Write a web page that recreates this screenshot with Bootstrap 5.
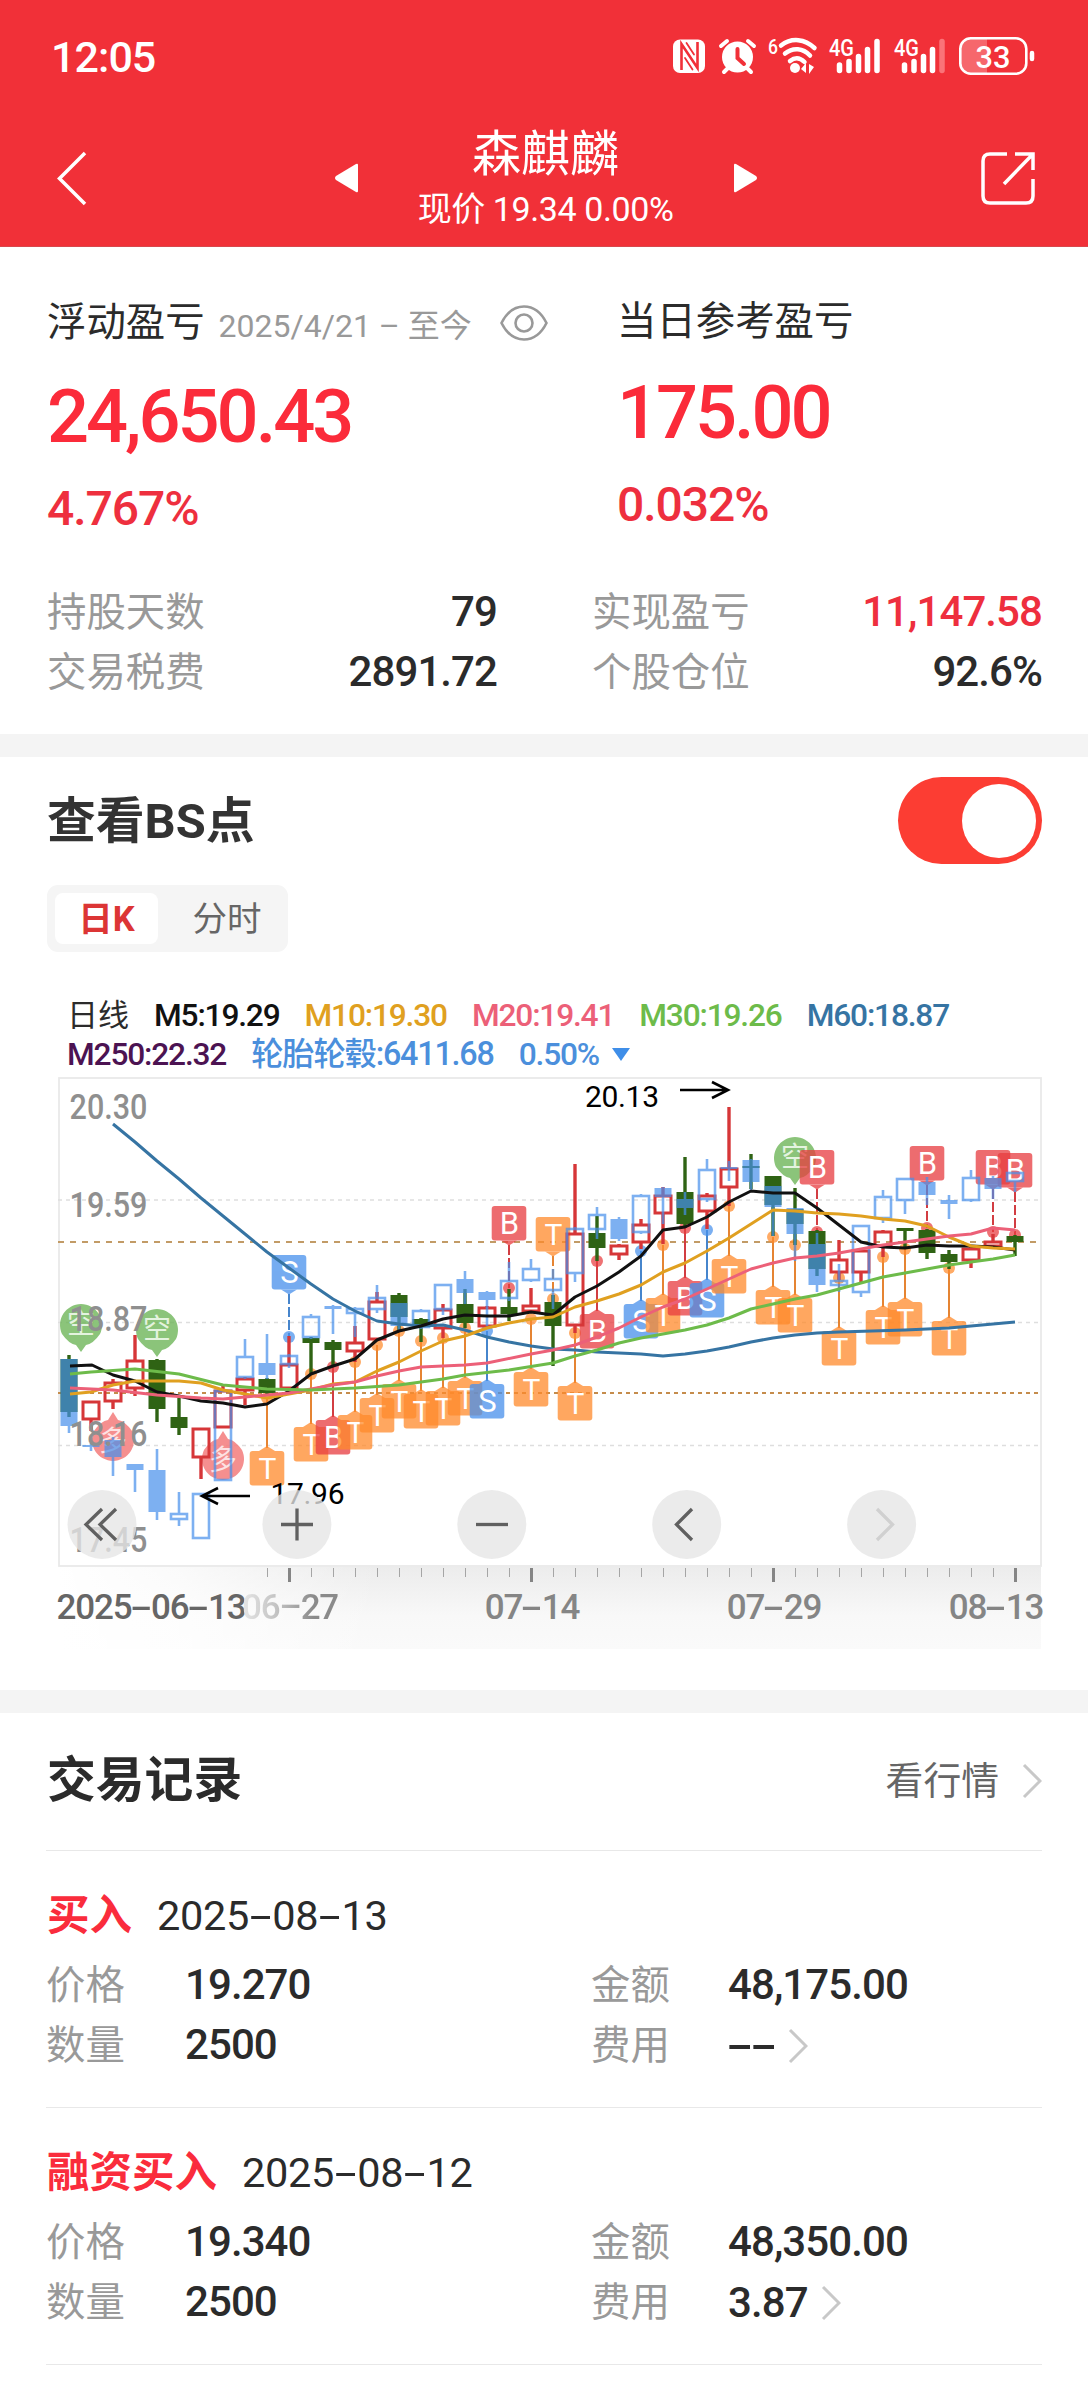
<!DOCTYPE html>
<html lang="zh-CN">
<head>
<meta charset="utf-8">
<meta name="viewport" content="width=device-width, initial-scale=1">
<title>森麒麟</title>
<link href="https://cdn.jsdelivr.net/npm/bootstrap@5.3.0/dist/css/bootstrap.min.css" rel="stylesheet">
<style>
  body { font-family: Roboto, "Noto Sans CJK SC", sans-serif; color: #2b2b2b; background: #fff; width: 1088px; overflow-x: hidden; }
  .num { letter-spacing: -.022em; font-weight: 500; white-space: nowrap; }
  .hy { display: inline-block; width: .56em; text-align: center; transform: scaleX(1.9); letter-spacing: 0; }
  .topbar { background: #f13038; height: 247px; color: #fff; border-bottom: 1px solid #d8474c; }
  .statusline { height: 114px; padding: 0 52px 0 51px; }
  .clock { font-size: 43px; }
  .navline { height: 132px; padding: 4px 53px 0 56px; }
  .navline svg { margin-bottom: 9px; }
  .navtitle { font-size: 49px; line-height: 54px; }
  .navsub { font-size: 34px; line-height: 54px; font-weight: 400; letter-spacing: -.012em; }
  .navmid { width: 424px; }
  .gut { padding-left: 47px; padding-right: 46px; }
  .lab { font-size: 39.4px; line-height: 60px; white-space: nowrap; }
  .dim { color: #999; }
  .range { font-size: 32px; color: #999; line-height: 54px; padding-top: 6px; margin: 0 28px 0 14px; white-space: nowrap; }
  .big { font-size: 74px; line-height: 90px; margin-top: 19px; color: #fb2b3a; letter-spacing: -.041em; }
  .pct { font-size: 48px; line-height: 60px; margin-top: 17px; color: #ee2f3e; }
  .val { font-size: 42px; line-height: 57px; }
  .up { color: #ee2f3e; }
  .band { height: 23px; background: #f4f4f4; }
  .head { font-size: 48.8px; font-weight: 700; line-height: 60px; color: #2b2b2b; }
  .switch { width: 144px; height: 87px; border-radius: 44px; background: #fc3d33; padding: 6.5px; }
  .knob { width: 74px; height: 74px; border-radius: 50%; background: #fff; }
  .segs { width: 241px; height: 67px; margin-top: 21px; padding: 8px; border-radius: 11px; background: #f5f5f5; font-size: 34.5px; line-height: 52px; }
  .seg-on { width: 103px; background: #fff; border-radius: 8px; color: #dc3535; font-weight: 700; flex-shrink: 0; }
  .seg-off { color: #666; width: 138px; flex-shrink: 0; }
  .legend-box { margin: 44px 0 0 20px; font-size: 31.7px; line-height: 39px; }
  .legend-box .num { letter-spacing: -.037em; }
  .chart-area { margin: 0 -46px 0 -47px; }
  .axis { height: 82px; margin: 0 0 41px 12px; font-size: 35px; line-height: 40px; color: #858585; width: 982px;
    background: linear-gradient(90deg, #fff 0, rgba(255,255,255,.75) 120px, rgba(255,255,255,0) 320px), linear-gradient(#ececec, #f8f8f8 60%, #fafafa); }
  .axis .tick-label { position: absolute; top: 21px; transform: translateX(-50%); letter-spacing: -.034em; }
  .rec { height: 257.2px; padding: 35px 0 0; border-bottom: 1px solid #e8e8e8; margin: 0 46px; }
  .rec-title { font-size: 41.5px; line-height: 60px; }
  .rec-type { font-size: 42.5px; color: #fa2c3c; margin: 0 25px 0 1px; }
  .rec-date { font-weight: 400; letter-spacing: -.008em; }
  .k { width: 139px; }
  .half { width: 545px; }
</style>
</head>
<body>
<header class="topbar">
  <div class="statusline d-flex align-items-center justify-content-between">
    <div class="clock num">12:05</div>
    <svg width="366" height="50" viewBox="670 32 366 50" fill="none" stroke="#fff" stroke-linecap="round">
      <rect x="673" y="39.500" width="32" height="33.500" rx="7" fill="#fff" stroke="none"/>
      <path d="M681.500 70V44L697.500 68V42" stroke="#f13038" stroke-width="2.600" stroke-linecap="butt"/>
      <path d="M686.500 43L694 54.500M685 58L692.500 69.500" stroke="#f13038" stroke-width="1.800"/>
      <circle cx="737.500" cy="57" r="15.500" fill="#fff" stroke="none"/>
      <path d="M721 46l6-5M754 46l-6-5M728 68l-4 4M747 68l4 4" stroke-width="4"/>
      <path d="M737.500 49v9l6.500 6" stroke="#f13038" stroke-width="4"/>
      <text x="768" y="54" font-size="20" font-weight="500" fill="#fff" stroke="none" textLength="10" lengthAdjust="spacingAndGlyphs">6</text>
      <path d="M781 45.500C792 37 805 39 814.500 48M785 53.500C793 47 803 48 810 55.500M790 61C795 57 800 57.500 804.500 62" stroke-width="4.500"/>
      <circle cx="795" cy="68" r="5" fill="#fff" stroke="none"/>
      <path d="M806 63v10l-5-4zM809 64v10l5-7z" fill="#fff" stroke="none"/>
      <text x="829" y="56" font-size="23.500" font-weight="500" fill="#fff" stroke="none" textLength="25" lengthAdjust="spacingAndGlyphs">4G</text>
      <path d="M839.500 65v5.500M849 61.500v9M858.500 56.500v14M867.500 49.500v21M877 41.500v29" stroke-width="5.500"/>
      <text x="894" y="56" font-size="23.500" font-weight="500" fill="#fff" stroke="none" textLength="25" lengthAdjust="spacingAndGlyphs">4G</text>
      <path d="M904.500 65v5.500M914 61.500v9M923.500 56.500v14M932.500 49.500v21" stroke-width="5.500"/>
      <path d="M942 41.500v29" stroke-width="5.500" stroke="#fa7378"/>
      <path d="M971 38.500h16v35h-16q-10-1-10-11v-13q0-10 10-11z" fill="#f6676c" stroke="none"/>
      <rect x="960.300" y="38.300" width="66" height="35.400" rx="10.500" stroke-width="2.600"/>
      <path d="M1032 53v6" stroke-width="4.500"/>
      <text x="975.500" y="68" font-size="32" font-weight="500" fill="#fff" stroke="none" textLength="35" lengthAdjust="spacingAndGlyphs">33</text>
    </svg>
  </div>
  <div class="navline d-flex justify-content-between align-items-center">
    <div style="width:54px"><svg width="32" height="56" viewBox="0 0 32 56" fill="none" stroke="#fff" stroke-width="3.500"><path d="M29 3L3.500 28.500L29 54"/></svg></div>
    <div class="navmid d-flex justify-content-between align-items-center">
      <svg width="24" height="32" viewBox="0 0 24 32" fill="#fff"><path d="M24 3v26q0 2-2 1L2 18q-2-2 0-4L22 2q2-1 2 1z"/></svg>
      <div class="text-center">
        <div class="navtitle">森麒麟</div>
        <div class="navsub num">现价 19.34 0.00%</div>
      </div>
      <svg width="24" height="32" viewBox="0 0 24 32" fill="#fff"><path d="M0 3v26q0 2 2 1L22 18q2-2 0-4L2 2Q0 1 0 3z"/></svg>
    </div>
    <svg width="54" height="54" viewBox="0 0 54 54" fill="none" stroke="#fff" stroke-width="3.500"><path d="M26 3H9Q2 3 2 10v35q0 7 7 7h36q7 0 7-7V28M34 3h18v16M52 3L23 33"/></svg>
  </div>
</header>

<section class="gut" style="height:487px;padding-top:46px">
  <div class="d-flex">
    <div style="width:570px">
      <div class="d-flex align-items-center">
        <span class="lab">浮动盈亏</span>
        <span class="range">2025/4/21 – 至今</span>
        <svg width="48" height="36" viewBox="0 0 48 36" fill="none" stroke="#999" stroke-width="2.600"><path d="M1.500 18C7 7 15 1.500 24 1.500S41 7 46.500 18C41 29 33 34.500 24 34.500S7 29 1.500 18z"/><circle cx="24" cy="18" r="8.500"/></svg>
      </div>
      <div class="num big">24,650.43</div>
      <div class="num pct">4.767%</div>
    </div>
    <div>
      <div class="lab" style="line-height:57px">当日参考盈亏</div>
      <div class="num big" style="margin-top:18px">175.00</div>
      <div class="num pct">0.032%</div>
    </div>
  </div>
  <div class="d-flex justify-content-between" style="margin-top:44px">
    <div style="width:450px">
      <div class="d-flex justify-content-between"><span class="lab dim">持股天数</span><span class="val num">79</span></div>
      <div class="d-flex justify-content-between"><span class="lab dim">交易税费</span><span class="val num">2891.72</span></div>
    </div>
    <div style="width:450px">
      <div class="d-flex justify-content-between"><span class="lab dim">实现盈亏</span><span class="val num up">11,147.58</span></div>
      <div class="d-flex justify-content-between"><span class="lab dim">个股仓位</span><span class="val num">92.6%</span></div>
    </div>
  </div>
</section>

<div class="band"></div>

<section class="gut" style="padding-top:20px">
  <div class="d-flex justify-content-between align-items-center" style="height:87px">
    <div class="head" style="color:#333;padding-top:2px">查看BS点</div>
    <div class="switch d-flex justify-content-end"><div class="knob"></div></div>
  </div>
  <div class="segs d-flex text-center"><div class="seg-on">日K</div><div class="seg-off">分时</div></div>
  <div class="legend-box">
    <div class="d-flex" style="gap:25px">
      <span style="font-size:31px">日线</span>
      <span class="num" style="color:#111">M5:19.29</span><span class="num" style="color:#e0a020">M10:19.30</span><span class="num" style="color:#ec6078">M20:19.41</span><span class="num" style="color:#6dbb4a">M30:19.26</span><span class="num" style="color:#3674a3">M60:18.87</span>
    </div>
    <div class="d-flex align-items-center" style="gap:25px">
      <span class="num" style="color:#4c1352">M250:22.32</span><span class="num" style="color:#4b8fdc;font-size:32.3px">轮胎轮毂:6411.68</span><span class="num" style="color:#4b8fdc">0.50%</span>
      <svg width="18" height="14" viewBox="0 0 18 14" style="margin-left:-12px"><path d="M0 0h18L9 13z" fill="#3f8ee8"/></svg>
    </div>
  </div>
  <div class="chart-area"><svg id="chart" class="d-block" width="1088" height="493" viewBox="0 1075 1088 493" font-family='Roboto, "Noto Sans CJK SC", sans-serif'></svg></div>
  <div class="axis position-relative" id="axis"></div>
</section>

<div class="band"></div>

<section>
  <div class="gut d-flex justify-content-between align-items-center" style="height:136.5px">
    <div class="head">交易记录</div>
    <div class="d-flex align-items-center" style="font-size:37.800px;color:#666">看行情<svg width="20" height="36" viewBox="0 0 20 36" fill="none" stroke="#c8c8c8" stroke-width="3" style="margin-left:23px"><path d="M2 2l16 16L2 34"/></svg></div>
  </div>
  <div style="margin:0 46px;border-top:1px solid #e8e8e8"></div>
  <div id="records"></div>
</section>

<script src="https://cdn.jsdelivr.net/npm/bootstrap@5.3.0/dist/js/bootstrap.bundle.min.js"></script>
<script>
const hy = s => s.replace(/-/g, '<span class="hy">-</span>');

/* trade records */
document.getElementById('records').innerHTML = [
  ['买入', '2025-08-13', '19.270', '48,175.00', '2500', '--'],
  ['融资买入', '2025-08-12', '19.340', '48,350.00', '2500', '3.87']
].map(([type, date, price, amount, qty, fee]) => `
  <div class="rec">
    <div class="rec-title d-flex"><b class="rec-type">${type}</b><span class="num rec-date">${hy(date)}</span></div>
    <div class="d-flex" style="margin-top:10px">
      <div class="half d-flex"><span class="lab dim k">价格</span><span class="val num">${price}</span></div>
      <div class="d-flex"><span class="lab dim" style="width:137px">金额</span><span class="val num">${amount}</span></div>
    </div>
    <div class="d-flex">
      <div class="half d-flex"><span class="lab dim k">数量</span><span class="val num">${qty}</span></div>
      <div class="d-flex align-items-center"><span class="lab dim" style="width:137px">费用</span><span class="val num">${hy(fee)}</span>
        <svg width="20" height="36" viewBox="0 0 20 36" fill="none" stroke="#c8c8c8" stroke-width="3" style="margin-left:13px"><path d="M2 2l16 16L2 34"/></svg></div>
    </div>
  </div>`).join('');

/* chart: candle i stands at X(i); rows are [colour, high, open/close top, bottom, low] */
const X = i => 69 + 22 * i;
const stock = [
 ['g',1356,1360,1413,1418],['r',1402,1403,1420,1432],['r',1380,1384,1402,1410],['r',1336,1362,1389,1397],['g',1360,1361,1410,1423],
 ['g',1399,1418,1429,1436],['r',1429,1430,1458,1480],['r',1385,1392,1428,1429],['r',1378,1380,1391,1406],['g',1379,1380,1394,1397],
 ['r',1337,1366,1389,1390],['g',1338,1339,1344,1375],['g',1341,1343,1351,1368],['r',1327,1344,1352,1363],['r',1293,1303,1340,1341],
 ['g',1294,1296,1318,1332],['g',1319,1320,1326,1343],['r',1305,1311,1329,1339],['g',1290,1305,1324,1329],['r',1307,1309,1327,1328],
 ['g',1290,1308,1315,1322],['r',1289,1307,1312,1314],['g',1296,1303,1327,1367],['r',1165,1235,1326,1334],['g',1217,1234,1249,1262],
 ['r',1245,1247,1255,1261],['r',1220,1226,1243,1250],['r',1188,1197,1214,1245],['g',1158,1193,1225,1229],['r',1194,1197,1212,1230],
 ['r',1108,1170,1188,1207],['g',1155,1167,1169,1190],['g',1177,1177,1206,1237],['g',1189,1210,1225,1246],['g',1231,1232,1270,1277],
 ['r',1241,1261,1273,1281],['r',1250,1252,1273,1284],['r',1231,1233,1247,1258],['g',1229,1229,1232,1250],['g',1230,1231,1254,1260],
 ['g',1251,1255,1263,1270],['r',1247,1250,1261,1269],['r',1235,1243,1247,1248],['g',1236,1237,1243,1257]];
/* sector index: h = hollow, s = solid */
const sector = [
 ['s',1360,1360,1427,1434],['s',1444,1446,1448,1452],['s',1438,1441,1458,1477],['s',1465,1465,1471,1493],['s',1450,1471,1513,1521],
 ['h',1493,1515,1520,1527],['h',1494,1495,1539,1540],['h',1391,1392,1481,1481],['h',1340,1358,1378,1380],['s',1335,1364,1376,1380],
 ['h',1355,1357,1365,1369],['h',1315,1318,1338,1340],['s',1306,1307,1310,1335],['h',1308,1310,1314,1338],['h',1286,1299,1310,1314],
 ['s',1304,1304,1327,1333],['h',1310,1312,1328,1330],['h',1285,1286,1310,1316],['s',1272,1280,1294,1305],['s',1292,1293,1301,1327],
 ['h',1263,1282,1299,1302],['h',1260,1270,1281,1283],['h',1270,1280,1291,1310],['h',1228,1230,1274,1283],['h',1208,1216,1230,1240],
 ['s',1218,1220,1240,1242],['h',1195,1197,1233,1235],['s',1188,1189,1198,1225],['s',1193,1200,1209,1216],['h',1160,1171,1200,1203],
 ['s',1162,1168,1170,1182],['s',1160,1161,1183,1192],['s',1187,1187,1208,1237],['s',1209,1209,1235,1262],['s',1234,1245,1286,1293],
 ['h',1265,1282,1286,1293],['h',1226,1227,1293,1298],['h',1191,1198,1219,1224],['h',1179,1180,1201,1215],['s',1178,1183,1196,1206],
 ['s',1196,1201,1205,1220],['h',1171,1179,1201,1203],['s',1177,1179,1190,1200],['h',1173,1174,1182,1193]];
/* deals: [index, letter, dot y, side] */
const deals = [[10,'S',1338,1],[20,'B',1289,1],[22,'T',1300,1],[34,'B',1233,1],[39,'B',1229,1],[42,'B',1233,1],[43,'B',1236,1],
 [9,'T',1399],[11,'T',1375],[12,'B',1368],[13,'T',1363],[14,'T',1346],[15,'T',1332],[16,'T',1342],[17,'T',1339],[18,'T',1329],[19,'S',1332],
 [21,'T',1320],[23,'T',1334],[24,'B',1262],[26,'S',1252],[27,'T',1246],[28,'B',1229],[29,'S',1231],[30,'T',1207],[32,'T',1238],[33,'T',1246],
 [35,'T',1279],[37,'T',1258],[38,'T',1250],[40,'T',1269]];
const fill = {T:'#ff8a2b', B:'#e83c3f', S:'#4790ec'}, pole = {T:'#e58432', B:'#d23d42', S:'#4685cc'};
let out = '';
const line = (x1,y1,x2,y2,c,w,extra='') => out += `<line x1="${x1}" y1="${y1}" x2="${x2}" y2="${y2}" stroke="${c}" stroke-width="${w}" ${extra}/>`;

out += '<rect x="59" y="1079" width="982" height="488" fill="none" stroke="#e9e9e9" stroke-width="1.8"/>';
[1201,1323.500,1446.500].forEach(y => line(58,y,1040,y,'#dedede',1.3,'stroke-dasharray="4 4"'));
line(58,1243,1040,1243,'#c29b66',1.8,'stroke-dasharray="6 6"');
line(58,1394,1040,1394,'#c58c4c',2,'stroke-dasharray="4 4"');

/* long / short signal balloons */
[[81,1325],[157,1330],[795,1158]].forEach(([x,y]) => out += `<g opacity=".78"><path d="M${x-19} ${y+10}A21 21 0 1 1 ${x+19} ${y+10}Q${x+12} ${y+20} ${x+5} ${y+21}L${x} ${y+28}L${x-5} ${y+21}Q${x-12} ${y+20} ${x-19} ${y+10}z" fill="#6ab355"/></g><text x="${x}" y="${y+10}" font-size="28" fill="#e4f3df" text-anchor="middle">空</text>`);
[[113,1442],[223,1461]].forEach(([x,y]) => out += `<path d="M${x-19} ${y-10}A21 21 0 1 0 ${x+19} ${y-10}Q${x+12} ${y-20} ${x+5} ${y-21}L${x} ${y-29}L${x-5} ${y-21}Q${x-12} ${y-20} ${x-19} ${y-10}z" fill="#f47f80" opacity=".88"/><text x="${x}" y="${y+10}" font-size="28" fill="#fde3e3" text-anchor="middle">多</text>`);

deals.forEach(([i,t,y,top]) => {
  const x = X(i), by = top ? y - 82 : y + 53;
  if (top) line(x,by+39,x,y,pole[t],2,'stroke-dasharray="10 3"'); else line(x,y,x,by-3,pole[t],2);
  out += `<circle cx="${x}" cy="${y}" r="6" fill="${fill[t]}" opacity=".72"/>`;
  const tip = top ? `M${x-8} ${by+34.500}h16l-8 5z` : `M${x-8} ${by}h16l-8-5z`;
  out += `<g opacity=".75" fill="${fill[t]}"><rect x="${x-17.300}" y="${by}" width="34.600" height="34.600" rx="3"/><path d="${tip}"/></g>`;
  out += `<text x="${x+.5}" y="${by+27.500}" font-size="${t==='T'?30:31}" fill="#fff" text-anchor="middle">${t}</text>`;
});

stock.forEach(([k,h,a,b,l],i) => {
  const c = k==='g' ? '#2f6314' : '#d63638', x = X(i);
  line(x,h,x,a,c,3.4); line(x,b,x,l,c,3.4);
  out += k==='g' ? `<rect x="${x-8.500}" y="${a}" width="17" height="${b-a}" fill="${c}"/>` : `<rect x="${x-8}" y="${a}" width="16" height="${b-a}" fill="none" stroke="${c}" stroke-width="3"/>`;
});
out += '<g opacity=".7">';
sector.forEach(([k,h,a,b,l],i) => {
  const c = '#4790ec', x = X(i);
  line(x,h,x,a,c,2.6); line(x,b,x,l,c,2.6);
  out += k==='s' ? `<rect x="${x-8.500}" y="${a}" width="17" height="${b-a}" fill="${c}"/>` : `<rect x="${x-8}" y="${a}" width="16" height="${b-a}" fill="none" stroke="${c}" stroke-width="2.6"/>`;
});
out += '</g>';

/* moving averages */
const ma = {
 '#3674a3': '113,1125 135,1143 157,1162 179,1180 201,1199 223,1217 245,1235 267,1253 289,1269 311,1285 333,1300 355,1312 377,1322 399,1325 421,1327 443,1326 465,1331 487,1338 509,1343 531,1347 553,1350 575,1351 597,1353 641,1355 663,1357 685,1355 707,1352 729,1348 751,1343 773,1339 795,1336 817,1334 839,1333 905,1331 949,1329 971,1327 1015,1323',
 '#111': '70,1367 92,1366 113,1376 135,1382 157,1393 179,1397 201,1402 223,1404 245,1408 267,1405 289,1392 311,1375 333,1367 355,1360 377,1341 399,1332 421,1327 443,1320 465,1316 487,1317 509,1317 531,1313 553,1316 575,1298 597,1287 619,1273 641,1257 663,1231 685,1228 707,1218 729,1203 751,1192 773,1194 795,1194 817,1209 839,1226 861,1243 883,1248 905,1249 927,1246 949,1247 971,1247 993,1248 1015,1251',
 '#e0a020': '70,1395 91,1393 113,1386 135,1382 179,1382 201,1384 223,1391 245,1395 267,1399 289,1395 311,1391 333,1385 355,1383 377,1372 399,1363 421,1352 443,1342 465,1337 487,1329 509,1324 531,1320 553,1318 575,1308 597,1302 619,1295 641,1286 663,1273 685,1264 707,1252 729,1239 751,1225 773,1211 795,1212 817,1214 839,1215 861,1217 883,1220 905,1222 927,1227 949,1238 971,1247 993,1249 1015,1250',
 '#ec6078': '70,1389 113,1391 157,1396 201,1399 223,1400 245,1398 267,1396 289,1394 333,1386 355,1383 377,1377 399,1372 421,1368 465,1366 487,1364 531,1355 553,1351 575,1346 597,1338 619,1329 641,1318 663,1308 685,1300 707,1290 729,1280 751,1270 773,1264 795,1259 817,1257 839,1254 861,1250 883,1246 905,1243 927,1240 949,1237 971,1235 993,1229 1015,1231',
 '#6dbb4a': '70,1375 91,1373 135,1370 179,1375 223,1386 267,1390 311,1391 355,1389 399,1386 421,1383 443,1380 465,1376 509,1371 553,1364 575,1357 597,1351 619,1344 641,1339 663,1335 685,1331 707,1326 729,1319 751,1310 773,1305 795,1300 817,1296 839,1290 861,1284 883,1278 905,1274 927,1270 949,1266 971,1263 993,1260 1015,1256'
};
for (const c in ma) out += `<polyline points="${ma[c]}" fill="none" stroke="${c}" stroke-width="3" stroke-linejoin="round"/>`;

[['20.30',1120],['19.59',1218],['18.87',1332],['18.16',1447],['17.45',1553]].forEach(([t,y]) =>
  out += `<text x="69.500" y="${y}" font-size="35" font-weight="500" fill="#8f8f8f" textLength="78" lengthAdjust="spacingAndGlyphs">${t}</text>`);
out += `<g fill="none" stroke="#000" stroke-width="2.600"><path d="M680 1091h47M712 1083l16 8l-16 8M250 1497h-47M218 1489l-16 8l16 8"/></g>
<text x="585" y="1107.500" font-size="30" fill="#000" textLength="74">20.13</text><text x="270.500" y="1505" font-size="30" fill="#000" textLength="74">17.96</text>`;

/* zoom and pan buttons */
[['M102 1510l-16 15.500l16 15.500M116 1510l-16 15.500l16 15.500','#606060'],['M281 1525.500h32M297 1509.500v32','#606060'],['M476 1525.500h32','#606060'],
 ['M692 1510l-15.500 15.500l15.500 15.500','#606060'],['M877 1510l15.500 15.500l-15.500 15.500','#d0d0d0']].forEach(([d,c],i) =>
  out += `<circle cx="${102+194.900*i}" cy="1525.500" r="34.500" fill="#e6e6e6" opacity=".78"/><path d="${d}" fill="none" stroke="${c}" stroke-width="3.300"/>`);
document.getElementById('chart').innerHTML = out;

/* date axis */
let ticks = '<svg class="d-block" width="982" height="16" viewBox="59 0 982 16">';
for (let i = 9; i < 44; i++) {
  const major = [10,21,32,43].includes(i);
  ticks += `<rect x="${X(i)-(major?1:0)}" y="1" width="${major?3:1}" height="${major?14:9}" fill="${major?'#858585':'#a5a5a5'}"/>`;
}
ticks += '</svg>';
document.getElementById('axis').innerHTML = ticks +
 [['2025-06-13',151,'#666'],['06-27',290,'#858585'],['07-14',532,''],['07-29',774,''],['08-13',996,'']].map(([t,x,c],i) =>
  `<span class="tick-label num" style="left:${x-59}px;${c?'color:'+c:''}${i===1?';background:linear-gradient(90deg,#e6e6e6,#c4c4c4 35%,#8a8a8a 75%);-webkit-background-clip:text;color:transparent':''}">${i===1?t.replace('-','–'):hy(t)}</span>`).join('');
</script>
</body>
</html>
